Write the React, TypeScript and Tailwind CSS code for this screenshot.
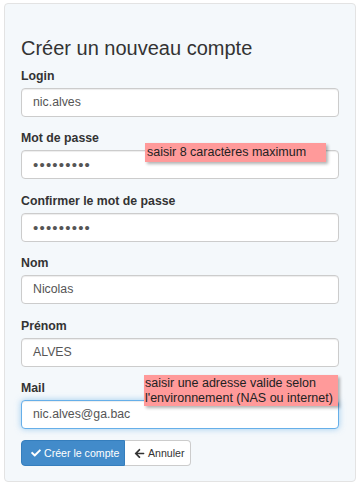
import React from "react";
import { FaCheck, FaArrowLeft } from "react-icons/fa";

const font = { fontFamily: '"Liberation Sans", Arial, Helvetica, sans-serif' };

function Field({
  label,
  value,
  password,
  focus,
  last,
}: {
  label: string;
  value: string;
  password?: boolean;
  focus?: boolean;
  last?: boolean;
}) {
  return (
    <div className={last ? "" : "mb-[13.4px]"}>
      <label className="block h-[17px] leading-[17px] mb-[3px] text-[12.3px] font-bold text-[#333]">
        {label}
      </label>
      <div
        className={
          "h-[29px] w-[318px] rounded-[4px] bg-white pl-[11px] flex items-center text-[12.3px] text-[#555] border " +
          (focus
            ? "border-[#66afe9] shadow-[inset_0_1px_1px_rgba(0,0,0,0.075),0_0_6px_rgba(102,175,233,0.6)]"
            : "border-[#cccccc] shadow-[inset_0_1px_1px_rgba(0,0,0,0.075)]")
        }
      >
        {password ? (
          <span className="tracking-[1.2px] text-[15px] leading-[15px] text-[#555]">•••••••••</span>
        ) : (
          <span>{value}</span>
        )}
      </div>
    </div>
  );
}

export default function App() {
  return (
    <div className="w-[360px] h-[491px] bg-white pt-[3px] pl-[4px]" style={font}>
      <div className="relative w-[352px] h-[479px] rounded-[4px] border border-[#e3e3e3] bg-[#f4f8fb] pl-[16px] pt-[33px]">
        <h3 className="h-[22px] leading-[22px] text-[20px] text-[#333] mb-[9px]">Créer un nouveau compte</h3>
        <Field label="Login" value="nic.alves" />
        <Field label="Mot de passe" value="" password />
        <Field label="Confirmer le mot de passe" value="" password />
        <Field label="Nom" value="Nicolas" />
        <Field label="Prénom" value="ALVES" />
        <Field label="Mail" value="nic.alves@ga.bac" focus last />
        <div className="flex mt-[11.5px]">
          <button className="h-[26px] w-[104px] flex items-center pl-[9px] gap-[3px] whitespace-nowrap rounded-l-[4px] bg-[#428bca] border border-[#357ebd] text-white text-[10.6px]">
            <FaCheck className="w-[10px] h-[10px] shrink-0" />
            <span>Créer le compte</span>
          </button>
          <button className="h-[26px] w-[66px] flex items-center pl-[9px] gap-[3px] whitespace-nowrap rounded-r-[4px] bg-white border border-l-0 border-[#cccccc] text-[#333] text-[10.6px]">
            <FaArrowLeft className="w-[11px] h-[11px] shrink-0" />
            <span>Annuler</span>
          </button>
        </div>

        <div className="absolute left-[140px] top-[139px] w-[181px] h-[19px] bg-[#ff9a9a] pl-[2px] leading-[18px] text-[12.5px] text-[#222] shadow-[2px_2px_3px_rgba(0,0,0,0.3)]">
          saisir 8 caractères maximum
        </div>
        <div className="absolute left-[139px] top-[371px] w-[194px] h-[31px] bg-[#ff9a9a] pl-[1px] pt-[1px] leading-[14.5px] text-[12.5px] text-[#222] shadow-[2px_2px_3px_rgba(0,0,0,0.3)]">
          saisir une adresse valide selon
          <br />
          l'environnement (NAS ou internet)
        </div>
      </div>
    </div>
  );
}
